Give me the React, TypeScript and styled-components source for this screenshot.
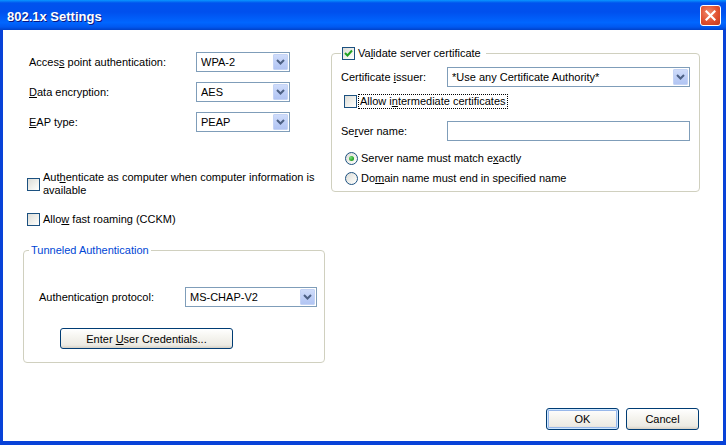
import React from "react"
import styled, { createGlobalStyle } from "styled-components"

const GlobalStyle = createGlobalStyle`
    html, body {
        margin: 0;
        padding: 0;
        background: #ffffff;
    }
    body {
        font-family: "Liberation Sans", Arial, sans-serif;
        font-size: 11px;
        color: #000000;
    }
    * {
        box-sizing: border-box;
    }
`

const Window = styled.div`
    width: 726px;
    height: 445px;
    display: flex;
    flex-direction: column;
    overflow: hidden;
`

const TitleBar = styled.div`
    flex: none;
    height: 30px;
    display: flex;
    align-items: center;
    justify-content: space-between;
    padding: 0 5px 0 7px;
    background: linear-gradient(
        to bottom,
        #0997ff 0%,
        #0053ee 10%,
        #0050ee 40%,
        #0066ff 75%,
        #0058f0 90%,
        #0041c8 100%
    );
`

const Title = styled.span`
    padding-top: 2px;
    color: #ffffff;
    font-family: "Liberation Sans", Arial, sans-serif;
    font-size: 13px;
    font-weight: bold;
    text-shadow: 1px 1px 0 #0a1883;
`

const CloseButton = styled.div`
    width: 21px;
    height: 21px;
    display: flex;
    align-items: center;
    justify-content: center;
    border: 1px solid #ffffff;
    border-radius: 3px;
    background: radial-gradient(circle at 40% 35%, #f08a6c 0%, #e0502f 55%, #c4391c 100%);
`

const Frame = styled.div`
    flex: 1;
    display: flex;
    flex-direction: column;
    background: #ffffff;
    border-style: solid;
    border-color: #0842d8;
    border-width: 0 3px 4px 3px;
    padding: 0 23px 11px 20px;
`

const Columns = styled.div`
    display: grid;
    grid-template-columns: 302px 369px;
    column-gap: 6px;
    align-items: start;
`

const LeftColumn = styled.div`
    display: flex;
    flex-direction: column;
    padding-top: 22px;
`

const RightColumn = styled.div`
    display: flex;
    flex-direction: column;
    padding-top: 17px;
`

const FieldStack = styled.div`
    display: flex;
    flex-direction: column;
    gap: 10px;
    padding-left: 6px;
`

const FieldRow = styled.div<{ $labelWidth: number; $top?: number }>`
    display: grid;
    grid-template-columns: ${p => p.$labelWidth}px auto;
    align-items: center;
    margin-top: ${p => p.$top ?? 0}px;
`

const Label = styled.span`
    line-height: 13px;
    white-space: nowrap;
`

const Key = styled.u`
    text-decoration: underline;
    text-underline-offset: 1px;
`

const SelectBox = styled.div<{ $width: number }>`
    width: ${p => p.$width}px;
    height: 20px;
    display: flex;
    align-items: center;
    border: 1px solid #7f9db9;
    background: #ffffff;
    padding: 0 1px 0 4px;
`

const SelectValue = styled.span`
    flex: 1;
    line-height: 13px;
    white-space: nowrap;
    overflow: hidden;
`

const ArrowButton = styled.span`
    width: 15px;
    height: 16px;
    display: flex;
    align-items: center;
    justify-content: center;
    border: 1px solid #c4d3f5;
    border-radius: 1px;
    background: linear-gradient(to bottom, #cfdcfa 0%, #bccdf6 60%, #b2c5f3 100%);
`

const TextInput = styled.div<{ $width: number }>`
    width: ${p => p.$width}px;
    height: 20px;
    border: 1px solid #7f9db9;
    background: #ffffff;
`

const CheckRow = styled.div<{ $top?: number; $indent?: number }>`
    display: flex;
    align-items: center;
    gap: 3px;
    margin-top: ${p => p.$top ?? 0}px;
    padding-left: ${p => p.$indent ?? 0}px;
    line-height: 13px;
`

const CheckText = styled.span<{ $focused?: boolean }>`
    line-height: 13px;
    ${p => p.$focused && `
        margin-left: -2px;
        padding: 0 1px;
        border: 1px dotted #000000;
    `}
`

const Box = styled.span`
    flex: none;
    width: 13px;
    height: 13px;
    display: flex;
    align-items: center;
    justify-content: center;
    border: 1px solid #1c5180;
    background: linear-gradient(135deg, #dcdcd7 0%, #f2f2ee 60%, #ffffff 100%);
`

const RadioDot = styled.span<{ $checked?: boolean }>`
    flex: none;
    width: 13px;
    height: 13px;
    display: flex;
    align-items: center;
    justify-content: center;
    border: 1px solid #1c5180;
    border-radius: 50%;
    background: linear-gradient(135deg, #dcdcd7 0%, #f2f2ee 60%, #ffffff 100%);
    &::after {
        content: "";
        display: ${p => (p.$checked ? "block" : "none")};
        width: 5px;
        height: 5px;
        border-radius: 50%;
        background: radial-gradient(circle at 35% 35%, #7be07b 0%, #2aa72a 60%, #1a8a1a 100%);
    }
`

const GroupBox = styled.fieldset<{ $top?: number }>`
    margin: ${p => p.$top ?? 0}px 0 0 0;
    padding: 0;
    min-width: 0;
    border: 1px solid #d0d0bf;
    border-radius: 4px;
`

const Legend = styled.legend<{ $offset: number; $color?: string }>`
    margin-left: ${p => p.$offset}px;
    padding: 0 2px;
    line-height: 13px;
    color: ${p => p.$color ?? "#000000"};
`

const LegendCheck = styled.legend`
    margin-left: 9px;
    padding: 0 5px 0 1px;
    line-height: 13px;
`

const GroupBody = styled.div<{ $padding: string }>`
    display: flex;
    flex-direction: column;
    padding: ${p => p.$padding};
`

const PushButton = styled.button<{ $width: number; $height: number; $isDefault?: boolean }>`
    width: ${p => p.$width}px;
    height: ${p => p.$height}px;
    padding: 0;
    font-family: "Liberation Sans", Arial, sans-serif;
    font-size: 11px;
    color: #000000;
    border: 1px solid #003c74;
    border-radius: 3px;
    background: linear-gradient(to bottom, #ffffff 0%, #f6f5f0 40%, #eceae3 85%, #d6d0c5 100%);
    box-shadow: ${p => (p.$isDefault ? "inset 0 0 0 1px #cee7ff, inset 0 0 0 2px #98b8ea" : "none")};
`

const CredentialsButton = styled(PushButton)`
    margin: 21px 0 2px 21px;
`

const Footer = styled.div`
    margin-top: auto;
    display: flex;
    justify-content: flex-end;
    gap: 7px;
    padding-right: 1px;
`

const Chevron = () => (
    <svg width="9" height="6" viewBox="0 0 9 6">
        <path d="M1 1 L4.5 4.5 L8 1" fill="none" stroke="#4d6185" strokeWidth="2" />
    </svg>
)

const CloseIcon = () => (
    <svg width="11" height="11" viewBox="0 0 11 11">
        <path d="M1.5 1.5 L9.5 9.5 M9.5 1.5 L1.5 9.5" stroke="#ffffff" strokeWidth="2.2" strokeLinecap="square" />
    </svg>
)

const CheckMark = () => (
    <svg width="9" height="9" viewBox="0 0 9 9">
        <path d="M1 4 L3.5 6.5 L8 1.5" fill="none" stroke="#21a121" strokeWidth="2" />
    </svg>
)

function Select({ value, width }: { value: string; width: number }) {
    return (
        <SelectBox $width={width}>
            <SelectValue>{value}</SelectValue>
            <ArrowButton>
                <Chevron />
            </ArrowButton>
        </SelectBox>
    )
}

function App() {
    return (
        <>
            <GlobalStyle />
            <Window>
                <TitleBar>
                    <Title>802.1x Settings</Title>
                    <CloseButton>
                        <CloseIcon />
                    </CloseButton>
                </TitleBar>
                <Frame>
                    <Columns>
                        <LeftColumn>
                            <FieldStack>
                                <FieldRow $labelWidth={167}>
                                    <Label>Acces<Key>s</Key> point authentication:</Label>
                                    <Select value="WPA-2" width={94} />
                                </FieldRow>
                                <FieldRow $labelWidth={167}>
                                    <Label><Key>D</Key>ata encryption:</Label>
                                    <Select value="AES" width={94} />
                                </FieldRow>
                                <FieldRow $labelWidth={167}>
                                    <Label><Key>E</Key>AP type:</Label>
                                    <Select value="PEAP" width={94} />
                                </FieldRow>
                            </FieldStack>

                            <CheckRow $top={39} $indent={4}>
                                <Box />
                                <CheckText>
                                    Aut<Key>h</Key>enticate as computer when computer information is available
                                </CheckText>
                            </CheckRow>
                            <CheckRow $top={16} $indent={4}>
                                <Box />
                                <CheckText>Allo<Key>w</Key> fast roaming (CCKM)</CheckText>
                            </CheckRow>

                            <GroupBox $top={18}>
                                <Legend $offset={5} $color="#0046d5">Tunneled Authentication</Legend>
                                <GroupBody $padding="30px 0 11px 15px">
                                    <FieldRow $labelWidth={146}>
                                        <Label>Authenticati<Key>o</Key>n protocol:</Label>
                                        <Select value="MS-CHAP-V2" width={132} />
                                    </FieldRow>
                                    <div>
                                        <CredentialsButton $width={173} $height={21}>
                                            Enter <Key>U</Key>ser Credentials...
                                        </CredentialsButton>
                                    </div>
                                </GroupBody>
                            </GroupBox>
                        </LeftColumn>

                        <RightColumn>
                            <GroupBox>
                                <LegendCheck>
                                    <CheckRow>
                                        <Box>
                                            <CheckMark />
                                        </Box>
                                        <CheckText>Va<Key>l</Key>idate server certificate</CheckText>
                                    </CheckRow>
                                </LegendCheck>
                                <GroupBody $padding="7px 9px 6px 9px">
                                    <FieldRow $labelWidth={106}>
                                        <Label>Certificate <Key>i</Key>ssuer:</Label>
                                        <Select value="*Use any Certificate Authority*" width={243} />
                                    </FieldRow>
                                    <CheckRow $top={7} $indent={3}>
                                        <Box />
                                        <CheckText $focused>Allow i<Key>n</Key>termediate certificates</CheckText>
                                    </CheckRow>
                                    <FieldRow $labelWidth={106} $top={12}>
                                        <Label>Se<Key>r</Key>ver name:</Label>
                                        <TextInput $width={243} />
                                    </FieldRow>
                                    <CheckRow $top={11} $indent={4}>
                                        <RadioDot $checked />
                                        <CheckText>Server name must match e<Key>x</Key>actly</CheckText>
                                    </CheckRow>
                                    <CheckRow $top={7} $indent={4}>
                                        <RadioDot />
                                        <CheckText>Do<Key>m</Key>ain name must end in specified name</CheckText>
                                    </CheckRow>
                                </GroupBody>
                            </GroupBox>
                        </RightColumn>
                    </Columns>

                    <Footer>
                        <PushButton $width={73} $height={22} $isDefault>OK</PushButton>
                        <PushButton $width={73} $height={22}>Cancel</PushButton>
                    </Footer>
                </Frame>
            </Window>
        </>
    )
}

export default App
